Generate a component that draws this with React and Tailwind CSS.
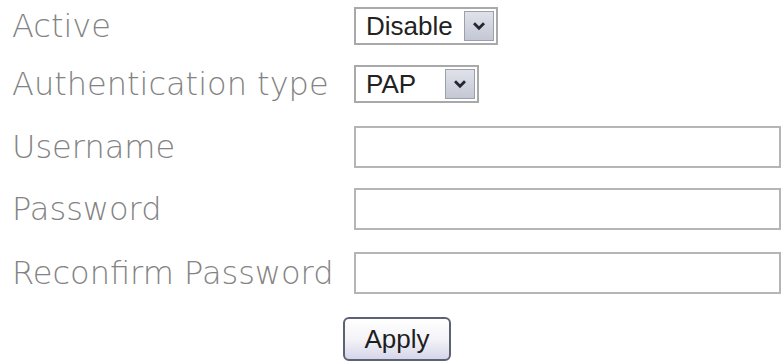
import React from "react";

function Chevron() {
  return (
    <svg width="12" height="9" viewBox="0 0 12 9">
      <path d="M2 2.2 L6 6.2 L10 2.2" fill="none" stroke="#222733" strokeWidth="2.8" strokeLinecap="square" />
    </svg>
  );
}

function Select({ value, width }) {
  return (
    <div
      className={`relative flex items-center h-[38px] border-2 border-[#a9a9a9] bg-white ${width}`}
      style={{ fontFamily: '"Liberation Sans", Arial, sans-serif' }}
    >
      <span className="pl-[10px] text-[26px] leading-none text-[#222]">{value}</span>
      <div className="absolute right-[2px] top-[2px] bottom-[2px] w-[30px] flex items-center justify-center border border-[#9aa0ac] bg-gradient-to-b from-[#e0e2ea] to-[#c4c8d4]">
        <Chevron />
      </div>
    </div>
  );
}

function Field() {
  return <div className="h-[42px] w-[427px] border-2 border-[#b5b5b5] bg-white" />;
}

function Row({ h, label, children }) {
  return (
    <div className={`flex items-center ${h}`}>
      <div
        className="w-[354px] pl-[12px] text-[32px] leading-none text-[#838383] font-light whitespace-nowrap"
        style={{ fontFamily: '"DejaVu Sans", Verdana, sans-serif' }}
      >
        {label}
      </div>
      {children}
    </div>
  );
}

export default function App() {
  return (
    <div className="w-[784px] h-[362px] bg-white overflow-hidden flex flex-col">
      <Row h="h-[52px]" label="Active">
        <Select value="Disable" width="w-[144px]" />
      </Row>
      <Row h="h-[64px]" label="Authentication type">
        <Select value="PAP" width="w-[125px]" />
      </Row>
      <Row h="h-[62px]" label="Username">
        <Field />
      </Row>
      <Row h="h-[62px]" label="Password">
        <Field />
      </Row>
      <Row h="h-[66px]" label="Reconfirm Password">
        <Field />
      </Row>
      <div className="flex pl-[343px] pt-[11px]">
        <button
          className="w-[108px] h-[44px] rounded-[6px] border-2 border-[#5d6272] bg-gradient-to-b from-white via-[#f4f4f8] to-[#d6d6ea] text-[26px] leading-none text-[#1e1e1e]"
          style={{ fontFamily: '"Liberation Sans", Arial, sans-serif' }}
        >
          Apply
        </button>
      </div>
    </div>
  );
}
